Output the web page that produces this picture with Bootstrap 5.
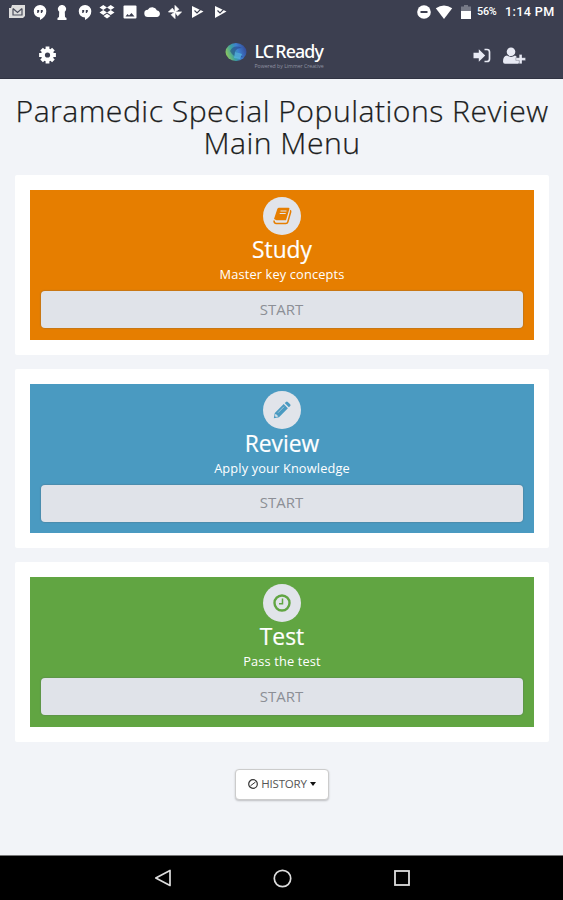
<!DOCTYPE html>
<html lang="en">
<head>
<meta charset="utf-8">
<meta name="viewport" content="width=device-width, initial-scale=1">
<title>LC Ready</title>
<link href="https://cdn.jsdelivr.net/npm/bootstrap@5.3.0/dist/css/bootstrap.min.css" rel="stylesheet">
<style>
body{font-family:"Open Sans","Noto Sans",sans-serif;background:#f2f4f8;height:900px;overflow:hidden}
svg{display:block;flex:none}
.topbar{height:79px;background:#3c3f50;border-bottom:1px solid #303342;color:#fff}
.status{height:24px;padding:0 8px 0 6px;font-family:Roboto,sans-serif;font-weight:500}
.status .slot{width:22.55px}
.pct{font-size:10.8px;margin:1px 0 0 6px;width:22px;letter-spacing:-.2px}
.time{font-size:12.6px;margin:1px 0 0 6px;letter-spacing:.38px;width:50px;white-space:nowrap}
.tools{height:54px;padding:0 37px 0 38px}
.side{width:60px}
.brand-name{font-size:17.8px;line-height:18px;letter-spacing:-.9px;word-spacing:-1.5px;font-family:"Noto Sans",sans-serif;font-weight:500;white-space:nowrap}
.brand-sub{font-size:5.2px;line-height:6px;color:#9093a2;margin-top:3px;white-space:nowrap;letter-spacing:-.02px}
.brand-box{width:115px}
.page-title{font-size:30.2px;line-height:32px;font-weight:300;color:#1b1c20;padding-top:16px;margin:0 -10px 16px;-webkit-text-stroke:.25px #1b1c20;white-space:nowrap;letter-spacing:.46px}
.content{padding:0 14px 0 15px}
.panel{background:#fff;padding:15px;height:179.5px;margin-bottom:14px;border-radius:2px}
.tile{height:149.5px;padding:7px 11px 0 11px;color:#fff}
.tile-study{background:#e67e00;--tone:#e67e00}
.tile-review{background:#4a9ac1;--tone:#4a9ac1}
.tile-test{background:#61a542;--tone:#61a542}
.disc{width:38px;height:38px;background:#e1e4ea;color:var(--tone)}
.tile h2{font-size:22.8px;line-height:28px;font-weight:400;margin:0;padding-top:1px;-webkit-text-stroke:.2px #fff}
.tile p{font-size:12.8px;line-height:16px;font-weight:500;letter-spacing:.14px;margin:2px 0 9px}
.btn-start{height:37px;background:#e0e3e9;color:#8c8f96;font-size:15px;line-height:20px;padding:0 1px 2px 0;border-radius:4px;border:0;box-shadow:0 0 1px 1px rgba(80,90,100,.22)}
.btn-start:hover{background:#d5d9e1}
.btn-history{width:94px;height:31px;margin-top:13px;background:#fff;border:1px solid #ccc;border-radius:4px;color:#555;font-size:11.5px;letter-spacing:-.22px;padding:0;box-shadow:0 1px 2px rgba(0,0,0,.22)}
.btn-history svg{margin-right:3px}
.btn-history::after{margin-left:3px!important;border-top-color:#111!important;border-width:4px 3.5px 0!important}
.navkeys{height:45px;background:#000;border-top:1px solid #777;gap:101px;padding-left:1px;color:#ddd}
</style>
<script src="https://cdn.jsdelivr.net/npm/bootstrap@5.3.0/dist/js/bootstrap.bundle.min.js"></script>
</head>
<body class="d-flex flex-column">
<header class="topbar flex-shrink-0">
  <div class="status d-flex align-items-center">
    <div class="slot d-flex justify-content-center"><svg width="16" height="14" viewBox="0 0 16 14"><path d="M3 0h13v11l-2 2H0V3h2z" fill="#ddd"/><path d="M4 3.500v6.500h9V3.500M4 3.500l4.500 4L13 3.500" fill="none" stroke="#4b4e5d" stroke-width="1.200"/></svg></div>
    <div class="slot d-flex justify-content-center"><svg width="14" height="15" viewBox="0 0 14 15"><path d="M7 0a6.200 6.200 0 0 1 6.300 6.200C13.300 10 11 13 7 15v-2.500A6.200 6.200 0 1 1 7 0z" fill="#fff"/><path d="M4.200 5h2v1.500l-1 1.500h-1zM7.800 5h2v1.500l-1 1.500h-1z" fill="#3c3f50"/></svg></div>
    <div class="slot d-flex justify-content-center"><svg width="10" height="15" viewBox="0 0 10 15"><path d="M5 0a3.900 3.900 0 0 1 2.800 6.800L8 12l1.500 1v2H.5v-2L2 12l.2-5.200A3.900 3.900 0 0 1 5 0z" fill="#fff"/></svg></div>
    <div class="slot d-flex justify-content-center"><svg width="14" height="15" viewBox="0 0 14 15"><path d="M7 0a6.200 6.200 0 0 1 6.300 6.200C13.300 10 11 13 7 15v-2.500A6.200 6.200 0 1 1 7 0z" fill="#fff"/><path d="M4.200 5h2v1.500l-1 1.500h-1zM7.800 5h2v1.500l-1 1.500h-1z" fill="#3c3f50"/></svg></div>
    <div class="slot d-flex justify-content-center"><svg width="16" height="14" viewBox="0 0 16 14" fill="#fff"><path d="M4.300 0 8 2.600 4.300 5 .5 2.600zM11.700 0l3.800 2.600L11.700 5 8 2.600zM4.300 5 8 7.600 4.300 10 .5 7.600zM11.700 5l3.800 2.600-3.800 2.400L8 7.600zM4.500 11 8 8.800l3.500 2.200L8 13.500z"/></svg></div>
    <div class="slot d-flex justify-content-center"><svg width="14" height="14" viewBox="0 0 14 14"><rect x=".5" y=".5" width="13" height="13" rx="1" fill="#fff"/><path d="M2.500 11.500l2-2.500 1.500 1.500L8.500 8l3 3.500z" fill="#3c3f50"/></svg></div>
    <div class="slot d-flex justify-content-center"><svg width="17" height="12" viewBox="0 0 17 12"><path d="M4 11a3.600 3.600 0 0 1-.2-7.200A5.200 5.200 0 0 1 13 4.500 3.300 3.300 0 0 1 13.300 11z" fill="#fff"/></svg></div>
    <div class="slot d-flex justify-content-center"><svg width="14" height="14" viewBox="0 0 14 14" fill="#fff"><path d="M7 7V.5l3.800 3.800zM7 7h6.500L9.700 10.800zM7 7v6.500L3.200 9.700zM7 7H.5l3.800-3.800z" stroke="#fff" stroke-width=".8"/></svg></div>
    <div class="slot d-flex justify-content-center"><svg width="13" height="14" viewBox="0 0 13 14"><path d="M1 1l11.500 5.500L1 13z" fill="#fff"/><path d="M3.500 5.500l2.500 2.500 5-5" fill="none" stroke="#3c3f50" stroke-width="1.200"/></svg></div>
    <div class="slot d-flex justify-content-center"><svg width="13" height="14" viewBox="0 0 13 14"><path d="M1 1l11.500 5.500L1 13z" fill="#fff"/><path d="M3.500 5.500l2.500 2.500 5-5" fill="none" stroke="#3c3f50" stroke-width="1.200"/></svg></div>
    <svg class="ms-auto" width="14" height="14" viewBox="0 0 14 14"><circle cx="7" cy="7" r="6.800" fill="#fff"/><path d="M3.500 7h7" stroke="#3c3f50" stroke-width="2"/></svg>
    <svg class="ms-1" width="18" height="14" viewBox="0 0 18 14"><path d="M.8 3.300Q9-2.500 17.200 3.300L9 14z" fill="#fff"/></svg>
    <svg class="ms-2" width="10" height="14" viewBox="0 0 10 14"><path d="M0 1.500h3V0h4v1.500h3V6H0z" fill="#777a87"/><path d="M0 6h10v8H0z" fill="#fff"/></svg>
    <span class="pct">56%</span><span class="time">1:14 PM</span>
  </div>
  <nav class="tools d-flex align-items-center justify-content-between pt-2">
    <a class="side text-white" href="#" aria-label="Settings"><svg width="19" height="18" viewBox="0 0 18 18"><g stroke="#fff" stroke-width="3.800"><path d="M9 .6v16.800M.6 9h16.800M3.100 3.100l11.800 11.800M14.900 3.100 3.100 14.900"/></g><circle cx="9" cy="9" r="6.500" fill="#fff"/><circle cx="9" cy="9" r="2.600" fill="#3c3f50"/></svg></a>
    <div class="d-flex align-items-start brand-box">
      <svg width="22" height="20" viewBox="0 0 22 20"><defs><linearGradient id="orb" x1="0" y1=".6" x2="1" y2=".3"><stop offset="0" stop-color="#91c95a"/><stop offset=".35" stop-color="#3a9fa3"/><stop offset=".6" stop-color="#3d7fd0"/><stop offset="1" stop-color="#344894"/></linearGradient></defs><ellipse cx="11" cy="10" rx="10.500" ry="9" fill="url(#orb)"/><path d="M5 9q4-7 12-3-6 0-7 4 4 1 8 5-9 2-13-6z" fill="#243a80" opacity=".5"/><path d="M10 10l7 2-2 5-6-1z" fill="#55b4df" opacity=".8"/></svg>
      <div class="ms-1 ps-1"><div class="brand-name">LC Ready</div><div class="brand-sub">Powered by Limmer Creative</div></div>
    </div>
    <div class="side d-flex justify-content-end align-items-center">
      <svg width="18" height="15" viewBox="0 0 18 15"><path d="M.5 4.800h5.300V1.300L12.200 7.500l-6.400 6.200v-3.500H.5z" fill="#e8eaf4"/><path d="M11.500 1.500H14q2.500 0 2.500 2.500v7q0 2.500-2.500 2.500h-2.500" fill="none" stroke="#e8eaf4" stroke-width="1.700"/></svg>
      <svg class="ms-2 ps-1" width="27" height="17" viewBox="0 0 23 17"><g fill="#e8eaf4"><circle cx="8" cy="4.800" r="4.300"/><path d="M4 8.500q4 2.800 8 0l1.500 1v3h2.700V16q-.5.700-1.500.7H2Q0 16.700 0 14.500q0-5.500 4-6z"/><path d="M16.200 7.500h2.800v3.200h3.500v2.700H19v3.300h-2.800v-3.300h-3.400v-2.700h3.400z" stroke="#3c3f50" stroke-width=".3"/></g></svg>
    </div>
  </nav>
</header>
<main class="content flex-grow-1 text-center">
  <h1 class="page-title">Paramedic Special Populations Review<br>Main Menu</h1>
  <section class="panel"><div class="tile tile-study">
    <div class="disc rounded-circle mx-auto d-flex align-items-center justify-content-center"><svg width="19" height="18" viewBox="0 0 19 18"><path d="M6 .8h9.500q1.300 0 .9 1.300L13 13.200H3.500L1 12 4.300 2Q4.800.8 6 .8z" fill="currentColor"/><path d="M17 3.300q1 .6.700 1.500L14.800 15q-.4 1.500-2 1.500H3.300Q1 16.500 1 13.500" fill="none" stroke="currentColor" stroke-width="1.500"/><path d="M7.500 4h6M6.700 6.500h6" stroke="#e1e4ea" stroke-width="1.100"/></svg></div>
    <h2>Study</h2><p>Master key concepts</p><button class="btn btn-start w-100 d-block">START</button>
  </div></section>
  <section class="panel"><div class="tile tile-review">
    <div class="disc rounded-circle mx-auto d-flex align-items-center justify-content-center"><svg width="18" height="18" viewBox="0 0 18 18"><path d="M.8 17.200 1.800 12 10.700 3.100l4.200 4.200L6 16.200zM11.700 2.100 13 .9q.9-.8 1.800 0l2.400 2.400q.8.900 0 1.800l-1.300 1.200z" fill="currentColor"/><path d="M2.700 13.200l2.100 2.100-1.800.5-.8-.8zM5 11.700l6-6" fill="#e1e4ea" stroke="#e1e4ea" stroke-width=".6"/></svg></div>
    <h2>Review</h2><p>Apply your Knowledge</p><button class="btn btn-start w-100 d-block">START</button>
  </div></section>
  <section class="panel"><div class="tile tile-test">
    <div class="disc rounded-circle mx-auto d-flex align-items-center justify-content-center"><svg width="18" height="18" viewBox="0 0 18 18" fill="none" stroke="currentColor"><circle cx="9" cy="9" r="7.500" stroke-width="2.400"/><path d="M9.500 4.500v5.300H6" stroke-width="1.500"/></svg></div>
    <h2>Test</h2><p>Pass the test</p><button class="btn btn-start w-100 d-block">START</button>
  </div></section>
  <button class="btn btn-history dropdown-toggle d-inline-flex align-items-center justify-content-center" data-bs-toggle="dropdown"><svg width="10" height="10" viewBox="0 0 10 10" fill="none" stroke="#333"><circle cx="5" cy="5" r="4.300" stroke-width="1.200"/><path d="M2.500 6.800 7.500 3" stroke-width="1"/></svg>HISTORY</button>
</main>
<footer class="navkeys d-flex align-items-center justify-content-center flex-shrink-0">
  <svg width="18" height="18" viewBox="0 0 18 18" fill="none" stroke="currentColor" stroke-width="1.700"><path d="M16 1.500v15L1.800 9z" stroke-linejoin="round"/></svg>
  <svg width="19" height="19" viewBox="0 0 19 19" fill="none" stroke="currentColor" stroke-width="1.700"><circle cx="9.500" cy="9.500" r="8.200"/></svg>
  <svg width="18" height="18" viewBox="0 0 18 18" fill="none" stroke="currentColor" stroke-width="1.800"><rect x="2" y="2" width="14" height="14"/></svg>
</footer>
</body>
</html>
